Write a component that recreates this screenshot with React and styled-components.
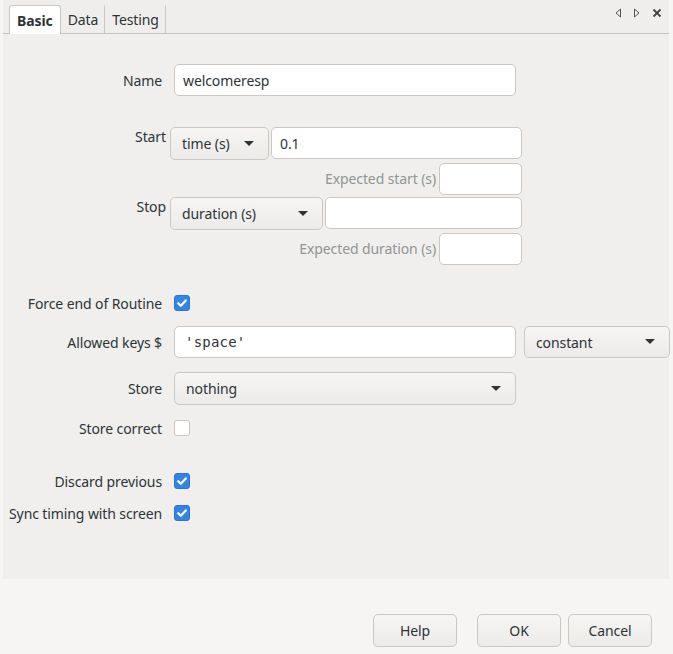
import styled, { createGlobalStyle } from "styled-components";

const GlobalStyle = createGlobalStyle`
  html, body {
    margin: 0;
    padding: 0;
    background: #f6f5f4;
  }
  body {
    font-family: "Noto Sans", "DejaVu Sans", sans-serif;
    font-size: 14px;
    letter-spacing: -0.1px;
    color: #2e3436;
  }
`;

export default function App() {
	return (
		<Window>
			<GlobalStyle />
			<TabBar>
				<Tabs>
					<Tab $active>Basic</Tab>
					<Tab>Data</Tab>
					<Tab>Testing</Tab>
				</Tabs>
				<TabControls>
					<Arrow viewBox="0 0 8 10">
						<path d="M6.5 1 L2 5 L6.5 9 Z" fill="none" stroke="#555" strokeWidth="1" />
					</Arrow>
					<Arrow viewBox="0 0 8 10">
						<path d="M1.5 1 L6 5 L1.5 9 Z" fill="none" stroke="#555" strokeWidth="1" />
					</Arrow>
					<Arrow viewBox="0 0 10 10">
						<path d="M1.5 1.5 L8.5 8.5 M8.5 1.5 L1.5 8.5" stroke="#444" strokeWidth="1.8" />
					</Arrow>
				</TabControls>
			</TabBar>
			<Panel>
				<Row $h={32}>
					<Label>Name</Label>
					<TextInput $w={342}>welcomeresp</TextInput>
				</Row>

				<TimeBlock>
					<TimeRow>
						<TimeLabel>Start</TimeLabel>
						<Select $w={99} $h={33}>
							time (s)
							<Caret />
						</Select>
						<TextInput $w={251}>0.1</TextInput>
					</TimeRow>
					<ExpectedRow>
						<Hint>Expected start (s)</Hint>
						<TextInput $w={83} />
					</ExpectedRow>
					<TimeRow>
						<TimeLabel>Stop</TimeLabel>
						<Select $w={153} $h={33}>
							duration (s)
							<Caret />
						</Select>
						<TextInput $w={197} />
					</TimeRow>
					<ExpectedRow>
						<Hint>Expected duration (s)</Hint>
						<TextInput $w={83} />
					</ExpectedRow>
				</TimeBlock>

				<Row $h={16} $mt={30}>
					<Label>Force end of Routine</Label>
					<Check $checked />
				</Row>
				<Row $h={32} $mt={15}>
					<Label>Allowed keys $</Label>
					<TextInput $w={342} $mono>'space'</TextInput>
					<Select $w={146} $h={32} $ml={8}>
						constant
						<Caret />
					</Select>
				</Row>
				<Row $h={33} $mt={14}>
					<Label>Store</Label>
					<Select $w={342} $h={33}>
						nothing
						<Caret />
					</Select>
				</Row>
				<Row $h={16} $mt={15}>
					<Label>Store correct</Label>
					<Check />
				</Row>
				<Row $h={16} $mt={37}>
					<Label>Discard previous</Label>
					<Check $checked />
				</Row>
				<Row $h={16} $mt={16}>
					<Label>Sync timing with screen</Label>
					<Check $checked />
				</Row>
			</Panel>
			<ButtonBar>
				<Button>Help</Button>
				<Button $ml={20}>OK</Button>
				<Button $ml={7}>Cancel</Button>
			</ButtonBar>
		</Window>
	);
}

function Check({ $checked }) {
	return (
		<CheckBox $checked={$checked}>
			{$checked && (
				<svg width="12" height="12" viewBox="0 0 12 12">
					<path
						d="M2.2 6.2 L4.8 8.8 L9.8 3.4"
						fill="none"
						stroke="#fff"
						strokeWidth="2.2"
						strokeLinecap="round"
						strokeLinejoin="round"
					/>
				</svg>
			)}
		</CheckBox>
	);
}

function Caret() {
	return (
		<CaretIcon viewBox="0 0 10 6">
			<path d="M0 0 L10 0 L5 5 Z" fill="#2e3436" />
		</CaretIcon>
	);
}

const Window = styled.div`
	width: 673px;
	height: 654px;
	display: flex;
	flex-direction: column;
	background: #f6f5f4;
	overflow: hidden;
`;

const TabBar = styled.div`
	height: 34px;
	margin: 0 4px 0 3px;
	display: flex;
	align-items: flex-end;
	justify-content: space-between;
	border-bottom: 1px solid #c6c2bd;
	background: #efeeec;
	box-sizing: border-box;
`;

const Tabs = styled.div`
	display: flex;
	align-items: flex-end;
	padding-left: 6px;
	height: 100%;
`;

const Tab = styled.div`
	height: ${(p) => (p.$active ? "29px" : "28px")};
	margin-bottom: ${(p) => (p.$active ? "-1px" : "0")};
	padding: 0 ${(p) => (p.$active ? "7px" : "6px")} ${(p) => (p.$active ? "0" : "1px")};
	display: flex;
	align-items: center;
	box-sizing: border-box;
	font-weight: ${(p) => (p.$active ? 700 : 400)};
	background: ${(p) => (p.$active ? "#ffffff" : "transparent")};
	border: 1px solid ${(p) => (p.$active ? "#cdc7c2" : "transparent")};
	border-bottom: none;
	border-right: 1px solid #cdc7c2;
	border-radius: ${(p) => (p.$active ? "3px 3px 0 0" : "0")};
	color: #2e3436;
`;

const TabControls = styled.div`
	display: flex;
	align-items: center;
	gap: 11px;
	height: 100%;
	padding: 0 7px 4px 0;
`;

const Arrow = styled.svg`
	width: ${(p) => (p.viewBox === "0 0 10 10" ? "10px" : "8px")};
	height: 10px;
`;

const Panel = styled.div`
	height: 545px;
	margin: 0 4px 0 3px;
	padding: 30px 0 0 6px;
	background: #f0efed;
	box-sizing: border-box;
	display: flex;
	flex-direction: column;
`;

const Row = styled.div`
	display: flex;
	align-items: center;
	height: ${(p) => p.$h}px;
	margin-top: ${(p) => p.$mt || 0}px;
`;

const Label = styled.div`
	width: 153px;
	margin-right: 12px;
	text-align: right;
	white-space: nowrap;
	flex-shrink: 0;
`;

const TextInput = styled.div`
	width: ${(p) => p.$w}px;
	height: 32px;
	box-sizing: border-box;
	background: #ffffff;
	border: 1px solid #cdc7c2;
	border-radius: 5px;
	padding: 0 ${(p) => (p.$mono ? "10px" : "8px")};
	display: flex;
	align-items: center;
	flex-shrink: 0;
	font-family: ${(p) =>
		p.$mono ? '"DejaVu Sans Mono", monospace' : '"Noto Sans", sans-serif'};
	letter-spacing: ${(p) => (p.$mono ? "0.2px" : "-0.1px")};
`;

const Select = styled.div`
	width: ${(p) => p.$w}px;
	height: ${(p) => p.$h}px;
	margin-left: ${(p) => p.$ml || 0}px;
	box-sizing: border-box;
	border: 1px solid #cdc7c2;
	border-radius: 5px;
	background: linear-gradient(#f6f5f4, #edebe9);
	padding: 0 11px;
	display: flex;
	align-items: center;
	justify-content: space-between;
	flex-shrink: 0;
	color: #2e3436;
`;

const CaretIcon = styled.svg`
	width: 10px;
	height: 6px;
	margin-right: 3px;
`;

const TimeBlock = styled.div`
	display: flex;
	flex-direction: column;
	margin-top: 31px;
`;

const TimeRow = styled.div`
	display: flex;
	align-items: flex-start;
	gap: 2px;
	height: 33px;
	margin-top: 2px;

	&:first-child {
		margin-top: 0;
	}
`;

const TimeLabel = styled.div`
	width: 157px;
	text-align: right;
	flex-shrink: 0;
	margin-right: 2px;
`;

const ExpectedRow = styled.div`
	display: flex;
	align-items: center;
	justify-content: flex-end;
	width: 513px;
	gap: 3px;
	height: 33px;
	margin-top: 2px;
`;

const Hint = styled.div`
	color: #929595;
	white-space: nowrap;
`;

const CheckBox = styled.div`
	width: 16px;
	height: 16px;
	box-sizing: border-box;
	border-radius: 3px;
	background: ${(p) => (p.$checked ? "#3584e4" : "#ffffff")};
	border: 1px solid ${(p) => (p.$checked ? "#2a76d6" : "#cdc7c2")};
	display: flex;
	align-items: center;
	justify-content: center;
	flex-shrink: 0;
`;

const ButtonBar = styled.div`
	display: flex;
	align-items: center;
	padding: 35px 0 0 373px;
`;

const Button = styled.div`
	width: 84px;
	height: 33px;
	margin-left: ${(p) => p.$ml || 0}px;
	flex-shrink: 0;
	box-sizing: border-box;
	border: 1px solid #cdc7c2;
	border-radius: 5px;
	background: linear-gradient(#f6f5f4, #edebe9);
	display: flex;
	align-items: center;
	justify-content: center;
	color: #2e3436;
`;
